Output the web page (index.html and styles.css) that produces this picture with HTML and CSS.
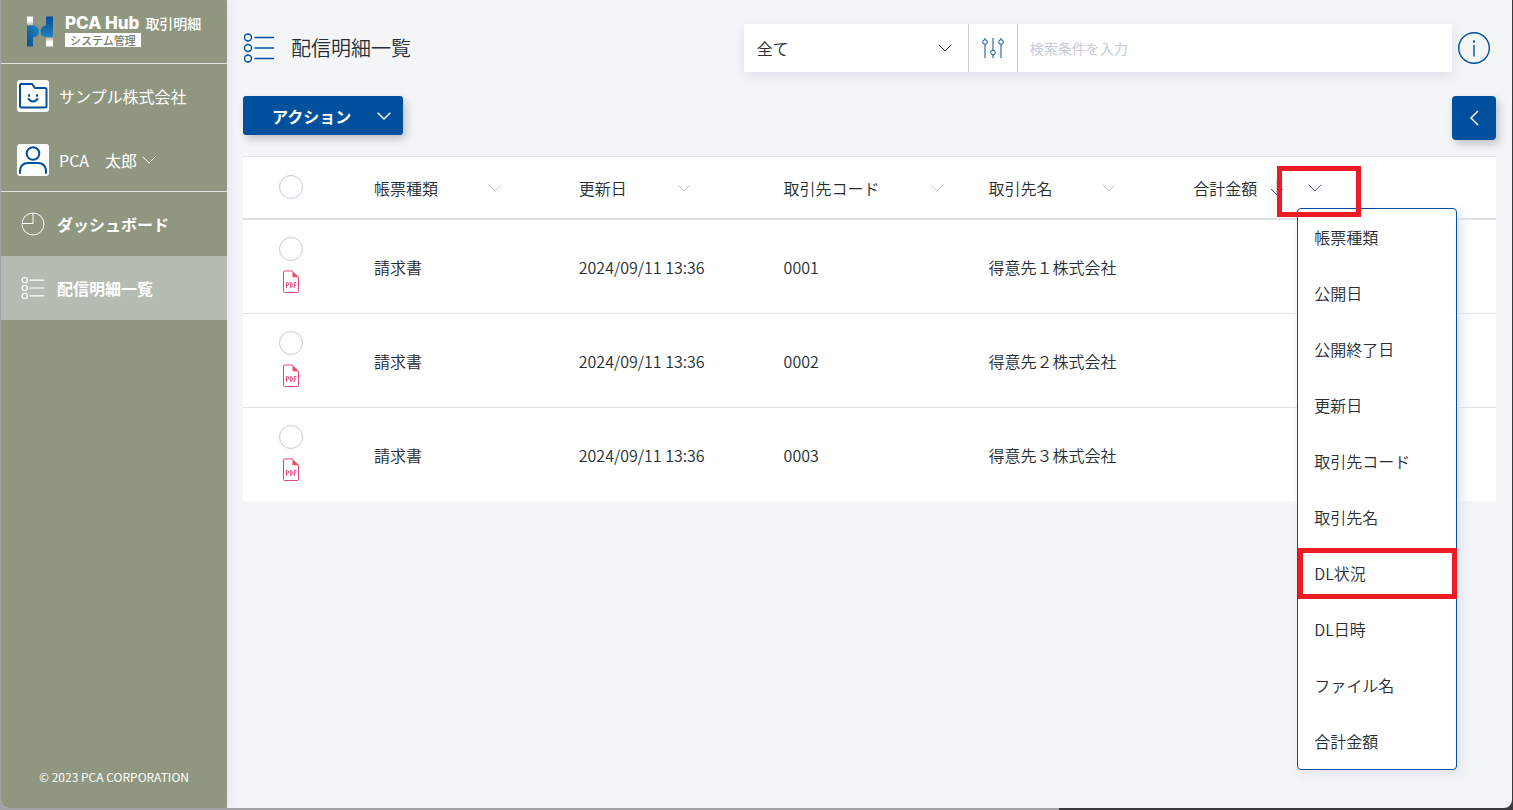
FILE: index.html
```html
<!DOCTYPE html>
<html lang="ja">
<head>
<meta charset="utf-8">
<meta name="viewport" content="width=device-width, initial-scale=1">
<title>配信明細一覧 | PCA Hub 取引明細</title>
<link rel="stylesheet" href="styles.css">
</head>
<body>
<svg class="sprite" aria-hidden="true">
  <symbol id="chevron" viewBox="0 0 14 8"><path d="M.7.7 7 7 13.3.7"/></symbol>
  <symbol id="list" viewBox="0 0 32 32"><circle cx="5" cy="5.500" r="3.500"/><circle cx="5" cy="16" r="3.500"/><circle cx="5" cy="26.500" r="3.500"/><path d="M11.500 5.500H31M11.500 16H31M11.500 26.500H31"/></symbol>
  <symbol id="pdf" viewBox="0 0 18 24"><path d="M11 1H2.500Q1.500 1 1.500 2V21.500Q1.500 22.500 2.500 22.500H15.500Q16.500 22.500 16.500 21.500V7"/><path class="fold" d="M10.500 1 17 7.300H10.500Z"/><path d="M4.500 18V12.500H5.500Q6.500 12.500 6.500 14T5.500 15.500H4.500M8.300 12.500V17.500H8.800Q10.300 17.500 10.300 15T8.800 12.500H8.300M12.300 18V12.500H14.500M12.300 15H14.200"/></symbol>
</svg>
<div class="app">
  <aside class="sidebar">
    <header class="brand">
      <svg class="brand-mark" viewBox="0 0 28 30" aria-hidden="true">
        <defs>
          <linearGradient id="blue" x1="0" y1="1" x2="1" y2="0"><stop offset="0" stop-color="#0a4c96"/><stop offset="1" stop-color="#2289c4"/></linearGradient>
          <linearGradient id="blue2" x1="0" y1="1" x2="0" y2="0"><stop offset="0" stop-color="#2081bd"/><stop offset="1" stop-color="#0a4c96"/></linearGradient>
          <linearGradient id="pale" x1="0" y1="0" x2="0" y2="1"><stop offset="0" stop-color="#fff"/><stop offset=".5" stop-color="#fff"/><stop offset="1" stop-color="#a9b0a0"/></linearGradient>
          <linearGradient id="pale2" x1="0" y1="1" x2="0" y2="0"><stop offset="0" stop-color="#fff"/><stop offset=".5" stop-color="#fff"/><stop offset="1" stop-color="#a9b0a0"/></linearGradient>
        </defs>
        <path fill="url(#pale)" d="M1 0H7V9H1Z"/>
        <path fill="url(#blue)" d="M1 9H8Q13 10 13 15T8 20.500L7 21V30H1Z"/>
        <path fill="url(#blue2)" d="M27 0H20V9Q14.500 10 14.500 15T20 20.500H27Z"/>
        <path fill="url(#pale2)" d="M20 21H27V30H20Z"/>
      </svg>
      <div class="brand-text">
        <div class="brand-name"><span class="brand-en">PCA Hub</span><span class="brand-ja">取引明細</span></div>
        <span class="brand-tag">システム管理</span>
      </div>
    </header>
    <section class="account">
      <div class="account-row">
        <svg class="avatar" viewBox="0 0 32 32" aria-hidden="true"><path d="M3 5Q3 4 4 4H15L18 8H28Q29.500 8 29.500 9.500V26Q29.500 27.500 28 27.500H4.500Q3 27.500 3 26Z"/><path d="M12 15V16M20 15V16M11.500 19Q16 24 20.500 19"/></svg>
        <span>サンプル株式会社</span>
      </div>
      <button class="account-row" type="button">
        <svg class="avatar" viewBox="0 0 32 32" aria-hidden="true"><circle cx="16" cy="9.500" r="6.300"/><path d="M3 29V26.500Q4 19 11 19H21Q28 19 29 26.500V29"/></svg>
        <span class="user-name">PCA　太郎<svg class="chevron"><use href="#chevron"/></svg></span>
      </button>
    </section>
    <nav class="nav">
      <a class="nav-link" href="#dashboard">
        <svg class="nav-icon" viewBox="0 0 24 24" aria-hidden="true"><path d="M12.500 1A11 11 0 1 1 1 12.500M1 11.500H12V1A11 11 0 0 0 1 11.500"/></svg>
        ダッシュボード
      </a>
      <a class="nav-link active" href="#list" aria-current="page">
        <svg class="nav-icon"><use href="#list"/></svg>
        配信明細一覧
      </a>
    </nav>
    <footer class="copyright">© 2023 PCA CORPORATION</footer>
  </aside>

  <main class="main">
    <header class="topbar">
      <h1 class="title"><svg class="title-icon" aria-hidden="true"><use href="#list"/></svg>配信明細一覧</h1>
      <form class="search">
        <div class="scope">
          <select class="scope-select" aria-label="検索対象"><option>全て</option></select>
          <svg class="chevron scope-chevron" aria-hidden="true"><use href="#chevron"/></svg>
        </div>
        <button class="filter" type="button" aria-label="絞り込み">
          <svg class="filter-icon" viewBox="0 0 24 24"><path d="M4 2V3.500M4 8.500V22M12 2V14M12 19V22M20 2V3.500M20 8.500V22"/><circle cx="4" cy="6" r="2.300"/><circle cx="12" cy="16.500" r="2.300"/><circle cx="20" cy="6" r="2.300"/></svg>
        </button>
        <input class="keyword" type="text" placeholder="検索条件を入力" aria-label="検索条件">
      </form>
      <button class="info" type="button" aria-label="情報">
        <svg viewBox="0 0 32 32"><circle cx="16" cy="16" r="15.300"/><path d="M16 13V24.500"/><path class="dot" d="M16 8.500V10.500"/></svg>
      </button>
    </header>

    <div class="toolbar">
      <button class="action" type="button">アクション<svg class="chevron"><use href="#chevron"/></svg></button>
      <button class="panel-toggle" type="button" aria-label="パネルを開く"><svg viewBox="0 0 10 16"><path d="M9 1 2 8 9 15"/></svg></button>
    </div>

    <table class="list">
      <colgroup><col class="col-check"><col><col><col><col><col><col class="col-end"></colgroup>
      <thead>
        <tr>
          <th class="check"><input type="checkbox" aria-label="すべて選択"></th>
          <th><div class="head">帳票種類<button class="col-menu" type="button" aria-label="帳票種類の項目変更"><svg class="chevron"><use href="#chevron"/></svg></button></div></th>
          <th><div class="head">更新日<button class="col-menu" type="button" aria-label="更新日の項目変更"><svg class="chevron"><use href="#chevron"/></svg></button></div></th>
          <th><div class="head">取引先コード<button class="col-menu" type="button" aria-label="取引先コードの項目変更"><svg class="chevron"><use href="#chevron"/></svg></button></div></th>
          <th><div class="head">取引先名<button class="col-menu" type="button" aria-label="取引先名の項目変更"><svg class="chevron"><use href="#chevron"/></svg></button></div></th>
          <th>
            <div class="head sorted">合計金額<svg class="sort" viewBox="0 0 14 20" aria-hidden="true"><path class="stem" d="M7 1V17"/><path d="M1 11 7 17 13 11"/></svg>
              <div class="open-menu">
                <button class="col-menu" type="button" aria-label="合計金額の項目変更" aria-expanded="true"><svg class="chevron"><use href="#chevron"/></svg></button>
                <ul class="menu">
                  <li><button type="button">帳票種類</button></li>
                  <li><button type="button">公開日</button></li>
                  <li><button type="button">公開終了日</button></li>
                  <li><button type="button">更新日</button></li>
                  <li><button type="button">取引先コード</button></li>
                  <li><button type="button">取引先名</button></li>
                  <li class="marked"><button type="button">DL状況</button></li>
                  <li><button type="button">DL日時</button></li>
                  <li><button type="button">ファイル名</button></li>
                  <li><button type="button">合計金額</button></li>
                </ul>
                <span class="callout"></span>
              </div>
            </div>
          </th>
          <th></th>
        </tr>
      </thead>
      <tbody>
        <tr><td class="check"><input type="checkbox" aria-label="0001を選択"><svg class="pdf" aria-hidden="true"><use href="#pdf"/></svg></td><td>請求書</td><td>2024/09/11 13:36</td><td>0001</td><td>得意先１株式会社</td><td></td><td></td></tr>
        <tr><td class="check"><input type="checkbox" aria-label="0002を選択"><svg class="pdf" aria-hidden="true"><use href="#pdf"/></svg></td><td>請求書</td><td>2024/09/11 13:36</td><td>0002</td><td>得意先２株式会社</td><td></td><td></td></tr>
        <tr><td class="check"><input type="checkbox" aria-label="0003を選択"><svg class="pdf" aria-hidden="true"><use href="#pdf"/></svg></td><td>請求書</td><td>2024/09/11 13:36</td><td>0003</td><td>得意先３株式会社</td><td></td><td></td></tr>
      </tbody>
    </table>
  </main>
</div>
</body>
</html>
```

FILE: styles.css
```css
:root {
  --blue: #00509d;
  --olive: #8f9780;
  --ink: #262d33;
  --line: #dee2e7;
  --red: #ed1c24;
}

* { box-sizing: border-box; }

body {
  margin: 0;
  padding: 0 1px 2px;
  background: linear-gradient(90deg, #a3a3a5 70%, #3a3a3c 70%);
  color: var(--ink);
  font: 350 16px/24px "Noto Sans CJK JP", sans-serif;
}

button, input, select { font: inherit; color: inherit; border: 0; margin: 0; padding: 0; background: none; border-radius: 0; }
svg { display: block; fill: none; stroke: currentColor; flex: none; }
.sprite { position: absolute; width: 0; height: 0; }
.chevron { width: 14px; height: 8px; }

.app {
  display: flex;
  min-height: calc(100vh - 2px);
  border-radius: 0 0 8px 8px;
  overflow: hidden;
  background: #f4f5f7;
}

/* Sidebar */
.sidebar {
  flex: none;
  width: 226px;
  display: flex;
  flex-direction: column;
  background: var(--olive);
  color: #fff;
  font-weight: 400;
  box-shadow: 0 0 12px #dcddf0;
}
.brand { display: flex; gap: 10px; height: 64px; padding: 16px 0 0 25px; border-bottom: 1px solid #e3e5df; }
.brand-mark { width: 28px; height: 31px; stroke: none; }
.brand-text { display: flex; flex-direction: column; align-items: flex-start; gap: 2px; padding-left: 1px; }
.brand-name { display: flex; align-items: center; gap: 6px; height: 15px; white-space: nowrap; }
.brand-en { font: 800 17px/15px Inter, sans-serif; }
.brand-ja { font: 500 14px/15px "Noto Sans CJK JP", sans-serif; }
.brand-tag { padding: 0 5px; background: #fff; color: #767e68; font-size: 11px; line-height: 14px; font-weight: 500; }
.account { border-bottom: 1px solid #e3e5df; height: 128px; }
.account-row { display: flex; align-items: center; gap: 10px; width: 100%; height: 64px; padding-left: 16px; text-align: left; }
.avatar { width: 32px; height: 32px; border-radius: 3px; background: #fff; stroke: var(--blue); stroke-width: 2; stroke-linecap: round; }
.user-name { display: flex; align-items: center; gap: 5px; }
.nav-link { display: flex; align-items: center; gap: 12px; height: 64px; padding-left: 20px; color: #fff; font-weight: 700; text-decoration: none; }
.nav-link.active { background: #b5bdb3; }
.nav-icon { width: 24px; height: 24px; }
.active .nav-icon { stroke-width: 1.6; }
.copyright { margin-top: auto; padding: 0 0 21px; text-align: center; font-size: 12px; line-height: 20px; }

/* Main area */
.main { flex: 1; min-width: 0; padding: 24px 16px; }
.topbar { display: flex; align-items: center; height: 48px; padding-right: 6px; }
.title { flex: 1; display: flex; align-items: center; gap: 16px; margin: 0; font-size: 20px; line-height: 32px; font-weight: 350; }
.title-icon { width: 32px; height: 32px; color: var(--blue); stroke-width: 1.4; }
.search { display: flex; width: 56.8%; height: 48px; margin-right: 6px; background: #fff; box-shadow: 0 4px 10px #dfe1ee; }
.scope { position: relative; flex: none; width: 225px; border-right: 1px solid #c9cbdd; }
.scope-select { width: 100%; height: 100%; padding-left: 13px; appearance: none; }
.scope-chevron { position: absolute; right: 16px; top: 20px; pointer-events: none; color: #34444a; }
.filter { flex: none; width: 49px; display: grid; place-items: center; border-right: 1px solid #c9cbdd; color: var(--blue); }
.filter-icon { width: 24px; height: 24px; }
.keyword { flex: 1; min-width: 0; padding: 0 12px; font-size: 14px; font-weight: 400; }
.keyword::placeholder { color: #c6cad9; opacity: 1; }
.info { width: 32px; height: 32px; color: var(--blue); }
.info svg { width: 32px; height: 32px; stroke-width: 1.4; }
.info .dot { stroke-width: 2; }

.toolbar { display: flex; justify-content: space-between; align-items: flex-start; margin: 24px 0 16px; }
.action, .panel-toggle { background: var(--blue); color: #fff; box-shadow: 3px 4px 8px #bfc1c5; }
.action { display: flex; align-items: center; justify-content: space-between; width: 160px; height: 39px; padding: 0 12px 0 29px; border-radius: 3px; font-weight: 700; }
.action .chevron { stroke-width: 1.4; }
.panel-toggle { width: 44px; height: 44px; display: grid; place-items: center; border-radius: 4px; }
.panel-toggle svg { width: 10px; height: 16px; stroke-width: 1.5; }

/* List */
.list { width: 100%; table-layout: fixed; border-collapse: separate; border-spacing: 0; background: #fff; }
.col-check { width: 115px; }
.col-end { width: 114px; }
.list th, .list td { padding: 0 0 0 16px; text-align: left; font-weight: 350; white-space: nowrap; }
.list th { height: 64px; border-top: 1px solid var(--line); border-bottom: 2px solid var(--line); }
.list td { height: 94px; border-bottom: 1px solid var(--line); }
.list tbody tr:last-child td { height: 93px; border-bottom: 0; }
.list .check { padding: 0 0 2px 36px; }
.check input { display: block; appearance: none; width: 24px; height: 24px; border: 1px solid #c6c9dc; border-radius: 50%; }
.pdf { width: 18px; height: 24px; margin: 9px 0 0 3px; color: #e0487b; }
.fold { fill: #ec4b63; stroke: none; }
.head { display: flex; align-items: center; height: 24px; }
.col-menu { display: block; margin-left: 50px; color: #b4cbe2; }
.sort { width: 14px; height: 20px; margin: 0 24px 0 13px; color: #435a96; }
.stem { stroke: #a4a9b5; }

.open-menu { position: relative; }
.open-menu .col-menu { margin: 0; color: #52629b; }
.menu {
  position: absolute; z-index: 1; top: 24px; left: -11px;
  width: 160px; margin: 0; padding: 0; list-style: none;
  background: #fff; border: 1px solid var(--blue); border-radius: 4px;
  box-shadow: 4px 4px 12px #dfe2f0;
}
.menu li { position: relative; }
.menu button { display: block; width: 100%; height: 56px; padding: 0 16px; text-align: left; }
.marked::after { content: ""; position: absolute; inset: 3px -1px 2px 0; border: 5px solid var(--red); pointer-events: none; }
.callout { position: absolute; z-index: 2; top: -18px; left: -31px; width: 84px; height: 51px; border: 5px solid var(--red); pointer-events: none; }
```
